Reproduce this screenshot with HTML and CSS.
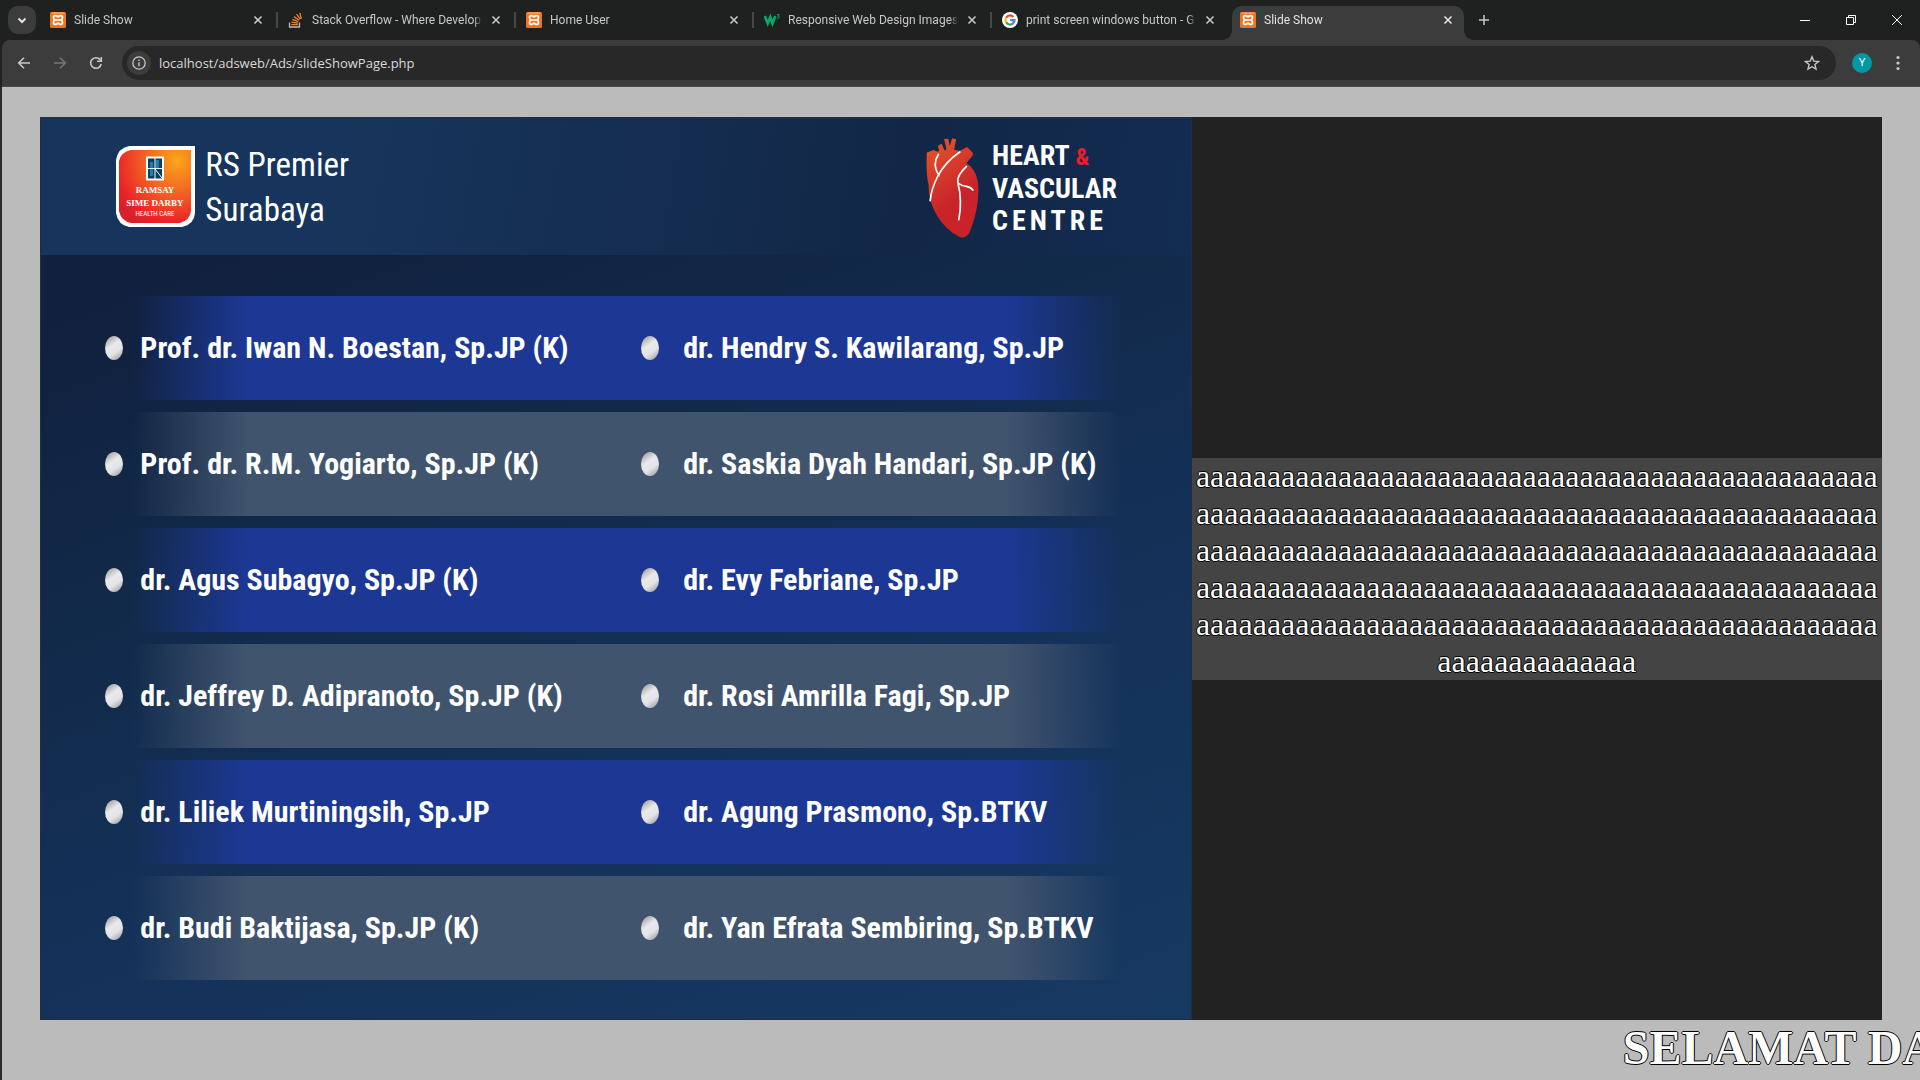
FILE: index.html
```html
<!DOCTYPE html>
<html lang="id">
<head>
<meta charset="utf-8">
<title>Slide Show</title>
<link rel="stylesheet" href="styles.css">
</head>
<body>
<svg class="defs" aria-hidden="true">
  <defs>
    <symbol id="xampp" viewBox="0 0 16 16">
      <rect width="16" height="16" rx="1.5" fill="#f0741c"/>
      <path d="M1.500 1h13" stroke="#fbb97c" stroke-width="1"/>
      <path d="M7.400 5.600V5c0-.9-.5-1.300-1.400-1.300H5C3.900 3.700 3.500 4.500 3.500 5.500c0 1.200.4 2 1.300 2.500-.9.500-1.300 1.300-1.300 2.500 0 1 .4 1.900 1.500 1.900h1c.9 0 1.400-.4 1.400-1.300v-.7M8.600 5.600V5c0-.9.5-1.300 1.400-1.300h1c1.100 0 1.500.8 1.500 1.800 0 1.200-.4 2-1.300 2.500.9.500 1.300 1.300 1.300 2.500 0 1-.4 1.900-1.500 1.900h-1c-.9 0-1.400-.4-1.400-1.300v-.7M4.800 8h6.400" fill="none" stroke="#fff" stroke-width="1.700"/>
    </symbol>
    <symbol id="close" viewBox="0 0 16 16">
      <path d="M4.500 4.500l7 7M11.500 4.500l-7 7" stroke="currentColor" stroke-width="1.600" fill="none"/>
    </symbol>
  </defs>
</svg>

<header class="browser">
  <div class="tabstrip">
    <button class="tab-search" aria-label="Search tabs"><svg width="16" height="16" viewBox="0 0 16 16"><path d="M4.500 6.500L8 10l3.500-3.500" fill="none" stroke="#e3e3e3" stroke-width="2"/></svg></button>
    <nav class="tabs">
      <div class="tab"><svg class="favicon"><use href="#xampp"/></svg><a class="title" href="#">Slide Show</a><button class="close" aria-label="Close tab"><svg><use href="#close"/></svg></button></div>
      <div class="tab"><svg class="favicon" viewBox="0 0 16 16"><path d="M1.500 10.500v4.500h10v-4.500" fill="none" stroke="#bcbbbb" stroke-width="1.300"/><path d="M3.300 12.600h6.500M3.500 10.200l6.400 1M4.300 7.400l6 2.300M6 4.600l5.100 3.700M8.600 2.100l3.700 5.100M12 .8l1.200 6" stroke="#f48024" stroke-width="1.300"/></svg><a class="title" href="#">Stack Overflow - Where Develop</a><button class="close" aria-label="Close tab"><svg><use href="#close"/></svg></button></div>
      <div class="tab"><svg class="favicon"><use href="#xampp"/></svg><a class="title" href="#">Home User</a><button class="close" aria-label="Close tab"><svg><use href="#close"/></svg></button></div>
      <div class="tab"><svg class="favicon" viewBox="0 0 16 16"><path d="M.8 4l2.900 7.500L6.300 5l2.200 6.500L11.300 4" fill="none" stroke="#04aa6d" stroke-width="2.600"/><path d="M13 2.700h2.300L14 4.200q1.500 0 1.300 1.200T13 6.200" fill="none" stroke="#04aa6d" stroke-width="1"/></svg><a class="title" href="#">Responsive Web Design Images</a><button class="close" aria-label="Close tab"><svg><use href="#close"/></svg></button></div>
      <div class="tab"><svg class="favicon" viewBox="0 0 16 16"><circle cx="8" cy="8" r="8" fill="#fff"/><g fill="none" stroke-width="2.200"><path d="M4.100 5.700A4.500 4.500 0 0 1 11.300 4.900" stroke="#ea4335"/><path d="M4.100 5.700a4.500 4.500 0 0 0 0 4.600" stroke="#fbbc05"/><path d="M4.100 10.300a4.500 4.500 0 0 0 6.900 1.100" stroke="#34a853"/><path d="M8.200 8.100h4.300a4.500 4.500 0 0 1-1.500 3.300" stroke="#4285f4"/></g></svg><a class="title" href="#">print screen windows button - G</a><button class="close" aria-label="Close tab"><svg><use href="#close"/></svg></button></div>
      <div class="tab active"><svg class="favicon"><use href="#xampp"/></svg><a class="title" href="#">Slide Show</a><button class="close" aria-label="Close tab"><svg><use href="#close"/></svg></button></div>
    </nav>
    <button class="new-tab" aria-label="New tab"><svg width="16" height="16" viewBox="0 0 16 16"><path d="M8 3v10M3 8h10" stroke="#c7c7c7" stroke-width="1.500"/></svg></button>
    <div class="window-controls">
      <button aria-label="Minimize"><svg width="10" height="10" viewBox="0 0 10 10"><path d="M0 5.500h10" stroke="#fff"/></svg></button>
      <button aria-label="Restore"><svg width="10" height="10" viewBox="0 0 10 10"><path d="M.5 2.500h7v7h-7zM2.500 2.500v-2h7v7h-2" fill="none" stroke="#fff"/></svg></button>
      <button aria-label="Close"><svg width="10" height="10" viewBox="0 0 10 10"><path d="M0 0l10 10M10 0L0 10" stroke="#fff"/></svg></button>
    </div>
  </div>
  <div class="toolbar">
    <button class="nav-button" aria-label="Back"><svg viewBox="0 0 16 16"><path d="M14 8H3M8 2.700L2.700 8 8 13.300" fill="none" stroke="#c7c7c7" stroke-width="1.600"/></svg></button>
    <button class="nav-button" aria-label="Forward" disabled><svg viewBox="0 0 16 16"><path d="M2 8h11M8 2.700L13.300 8 8 13.300" fill="none" stroke="#757575" stroke-width="1.600"/></svg></button>
    <button class="nav-button" aria-label="Reload"><svg viewBox="0 0 16 16"><path d="M13.200 9A5.300 5.300 0 1 1 12 4.500l1 1" fill="none" stroke="#c7c7c7" stroke-width="1.600"/><path d="M13.300 2v4.300H9" fill="none" stroke="#c7c7c7" stroke-width="1.600"/></svg></button>
    <form class="omnibox">
      <button class="site-info" type="button" aria-label="View site information"><svg width="16" height="16" viewBox="0 0 16 16"><circle cx="8" cy="8" r="6.200" fill="none" stroke="#c7c7c7" stroke-width="1.300"/><path d="M8 7.200v4M8 4.600V6" stroke="#c7c7c7" stroke-width="1.400"/></svg></button>
      <input class="url" type="text" aria-label="Address" value="localhost/adsweb/Ads/slideShowPage.php">
      <button class="bookmark" type="button" aria-label="Bookmark this tab"><svg width="16" height="16" viewBox="0 0 16 16"><path d="M8 1.800l1.800 4.300 4.700.4-3.600 3 1.100 4.600L8 11.700l-4 2.400 1.100-4.600-3.600-3 4.700-.4z" fill="none" stroke="#c7c7c7" stroke-width="1.400"/></svg></button>
    </form>
    <button class="avatar" aria-label="Profile">Y</button>
    <button class="menu" aria-label="Menu"><svg width="4" height="16" viewBox="0 0 4 16"><g fill="#c7c7c7"><circle cx="2" cy="2.500" r="1.600"/><circle cx="2" cy="8" r="1.600"/><circle cx="2" cy="13.500" r="1.600"/></g></svg></button>
  </div>
</header>

<main class="page">
  <div class="display">
    <section class="slide">
      <div class="slide-header">
        <div class="hospital">
          <svg class="hospital-logo" viewBox="0 0 79 81">
            <defs>
              <radialGradient id="sunset" cx="0.800" cy="0.150" r="1"><stop offset="0" stop-color="#faa61a"/><stop offset="0.500" stop-color="#f15a24"/><stop offset="0.850" stop-color="#ea2227"/><stop offset="1" stop-color="#d81f2a"/></radialGradient>
            </defs>
            <path d="M13 0h66v65q0 13-13 16H13Q2 79 0 67V14Q2 2 13 0z" fill="#fff"/>
            <path d="M15 4h60v61q-1 9-11 12H15Q5 75 3 65V15Q5 6 15 4z" fill="url(#sunset)"/>
            <path d="M30 10.500h18v24H30z" fill="#fff"/>
            <path d="M32 12.500h14v20H32z" fill="#0d3d66"/>
            <path d="M34 16h3v14h-3zM40 14h3v8h-3z" fill="#1783b0"/>
            <path d="M39 12v21M32 22.500h14M39 23l7 9" stroke="#fff" fill="none"/>
            <g fill="#fff" text-anchor="middle">
              <text class="logo-name" x="39" y="47">RAMSAY</text>
              <text class="logo-name" x="39" y="60">SIME DARBY</text>
              <text class="logo-sub" x="39" y="70">HEALTH CARE</text>
            </g>
          </svg>
          <p class="hospital-name">RS Premier<br>Surabaya</p>
        </div>
        <div class="centre">
          <svg class="heart" viewBox="141 83 158 303">
            <defs><linearGradient id="heart-fill" x1="0.200" y1="0" x2="0.600" y2="1"><stop offset="0" stop-color="#e4532a"/><stop offset="0.650" stop-color="#c8242b"/><stop offset="1" stop-color="#cb2229"/></linearGradient></defs>
            <path d="M142 127l21-8 12 5 5-3-4-14 11-7 10 21 5-4-7-31 12-1 5 21 7-22 12 3-6 31 17 3 22-11 18 19-3 9-18 21 12 8q24 22 25 69 0 57-21 115-11 38-35 29-45-20-74-74-20-38-20-84-8-30-5-95z" fill="url(#heart-fill)"/>
            <path d="M178 132q-20 30 1 64M242 125q-42 28-66 72-20 40-23 74M262 168q-30 28-26 48 14 55 3 112M239 220q12 8 22 8 14 2 20 11" fill="none" stroke="#fff" stroke-width="5" stroke-linecap="round"/>
          </svg>
          <p class="centre-name">HEART <span class="amp">&amp;</span><br>VASCULAR<br><span class="spread">CENTRE</span></p>
        </div>
      </div>
      <ul class="doctors">
        <li class="row"><span class="doctor">Prof. dr. Iwan N. Boestan, Sp.JP (K)</span><span class="doctor">dr. Hendry S. Kawilarang, Sp.JP</span></li>
        <li class="row"><span class="doctor">Prof. dr. R.M. Yogiarto, Sp.JP (K)</span><span class="doctor">dr. Saskia Dyah Handari, Sp.JP (K)</span></li>
        <li class="row"><span class="doctor">dr. Agus Subagyo, Sp.JP (K)</span><span class="doctor">dr. Evy Febriane, Sp.JP</span></li>
        <li class="row"><span class="doctor">dr. Jeffrey D. Adipranoto, Sp.JP (K)</span><span class="doctor">dr. Rosi Amrilla Fagi, Sp.JP</span></li>
        <li class="row"><span class="doctor">dr. Liliek Murtiningsih, Sp.JP</span><span class="doctor">dr. Agung Prasmono, Sp.BTKV</span></li>
        <li class="row"><span class="doctor">dr. Budi Baktijasa, Sp.JP (K)</span><span class="doctor">dr. Yan Efrata Sembiring, Sp.BTKV</span></li>
      </ul>
    </section>
    <aside class="side">
      <p class="message">aaaaaaaaaaaaaaaaaaaaaaaaaaaaaaaaaaaaaaaaaaaaaaaaaaaaaaaaaaaaaaaaaaaaaaaaaaaaaaaaaaaaaaaaaaaaaaaaaaaaaaaaaaaaaaaaaaaaaaaaaaaaaaaaaaaaaaaaaaaaaaaaaaaaaaaaaaaaaaaaaaaaaaaaaaaaaaaaaaaaaaaaaaaaaaaaaaaaaaaaaaaaaaaaaaaaaaaaaaaaaaaaaaaaaaaaaaaaaaaaaaaaaaaaaaaaaa</p>
    </aside>
  </div>
  <p class="ticker">SELAMAT DATANG</p>
</main>
</body>
</html>
```

FILE: styles.css
```css
* {
  box-sizing: border-box;
}

body {
  margin: 0;
  min-height: 100vh;
  display: flex;
  flex-direction: column;
  background: #2b2b2b;
  font-family: "Liberation Serif", "Times New Roman", serif;
}

button,
input {
  margin: 0;
  padding: 0;
  border: 0;
  background: none;
  color: inherit;
  font: inherit;
}

button {
  display: flex;
  align-items: center;
  justify-content: center;
  flex: none;
}

.defs {
  position: absolute;
  width: 0;
  height: 0;
}

/* Browser chrome */

.browser {
  background: #1f2120;
  color: #c7c7c7;
  font-family: Roboto, "Open Sans", sans-serif;
}

.tabstrip {
  display: flex;
  height: 40px;
  padding: 6px 0 0 8px;
}

.tab-search {
  width: 28px;
  height: 28px;
  border-radius: 10px;
  background: #3c3c3c;
}

.tabs {
  display: flex;
  gap: 6px;
  margin-left: 6px;
}

.tab {
  position: relative;
  display: flex;
  align-items: center;
  width: 232px;
  height: 34px;
  padding: 0 8px 6px;
  border-radius: 10px 10px 0 0;
}

.tab + .tab:not(.active)::before {
  content: "";
  position: absolute;
  left: -4px;
  top: 6px;
  width: 2px;
  height: 16px;
  background: #474747;
}

.favicon {
  flex: none;
  width: 16px;
  height: 16px;
}

.title {
  flex: 1;
  min-width: 0;
  margin: 0 2px 0 8px;
  overflow: hidden;
  white-space: nowrap;
  color: inherit;
  font-size: 12px;
  line-height: 20px;
  text-decoration: none;
  -webkit-mask-image: linear-gradient(to left, transparent 4px, #000 12px);
  mask-image: linear-gradient(to left, transparent 4px, #000 12px);
}

.close,
.close svg {
  width: 16px;
  height: 16px;
}

.tab.active {
  background: #3c3c3c;
  color: #e3e3e3;
}

.tab.active::before,
.tab.active::after {
  content: "";
  position: absolute;
  bottom: 0;
  width: 10px;
  height: 10px;
}

.tab.active::before {
  left: -10px;
  background: radial-gradient(circle at 0 0, transparent 10px, #3c3c3c 10px);
}

.tab.active::after {
  right: -10px;
  background: radial-gradient(circle at 100% 0, transparent 10px, #3c3c3c 10px);
}

.new-tab {
  width: 28px;
  height: 28px;
  margin-left: 6px;
}

.window-controls {
  display: flex;
  margin-left: auto;
}

.window-controls button {
  width: 46px;
  height: 28px;
}

.toolbar {
  display: flex;
  align-items: center;
  height: 47px;
  margin-left: 2px;
  padding: 0 12px 1px 4px;
  border-bottom: 1px solid #4a4a4a;
  border-radius: 8px 8px 0 0;
  background: #3c3c3c;
}

.nav-button {
  width: 36px;
  height: 34px;
}

.nav-button svg {
  width: 16px;
  height: 16px;
}

.omnibox {
  display: flex;
  align-items: center;
  flex: 1;
  height: 34px;
  margin: 0 16px 0 8px;
  padding: 0 12px 0 5px;
  border-radius: 17px;
  background: #282828;
}

.site-info {
  width: 24px;
  height: 24px;
  border-radius: 12px;
  background: #3c3c3c;
}

.url {
  flex: 1;
  margin-left: 8px;
  color: #dadada;
  font-family: "Open Sans", sans-serif;
  font-size: 13px;
  line-height: 20px;
}

.bookmark {
  width: 24px;
  height: 24px;
}

.avatar {
  width: 20px;
  height: 20px;
  border-radius: 10px;
  background: #0097a7;
  color: #fff;
  font-size: 11px;
}

.menu {
  width: 20px;
  height: 20px;
  margin-left: 16px;
}

/* Page content */

.page {
  flex: 1;
  margin-left: 2px;
  padding-top: 30px;
  overflow: hidden;
  background: #bbb;
}

.display {
  display: flex;
  width: 96%;
  margin: 0 auto;
}

.slide {
  flex: 5;
  min-width: 0;
  border: 1px solid #262c38;
  background: linear-gradient(160deg, #11203e 15%, #122a4a 40%, #143159 65%, #163962 100%);
  color: #fff;
  font-family: "Roboto Condensed", Roboto, sans-serif;
}

.slide-header {
  display: flex;
  justify-content: space-between;
  height: 137px;
  padding: 20px 74px 0 75px;
  background: linear-gradient(100deg, #17355c 25%, #122747 75%, #132c52);
}

.hospital,
.centre {
  display: flex;
  align-items: flex-start;
}

.hospital-logo {
  width: 79px;
  height: 81px;
  margin-top: 8px;
}

.logo-name {
  font: bold 9px "Liberation Serif", serif;
}

.logo-sub {
  font: 7px "Roboto Condensed", Roboto, sans-serif;
}

.hospital-name {
  margin: 4px 0 0 10px;
  font-size: 33px;
  line-height: 45px;
}

.heart {
  width: 53px;
  height: 101px;
}

.centre-name {
  margin: 2px 0 0 13px;
  font-size: 28px;
  font-weight: bold;
  line-height: 32px;
}

.amp {
  color: #e3202c;
  font-size: 24px;
}

.spread {
  letter-spacing: 4px;
}

.doctors {
  display: flex;
  flex-direction: column;
  gap: 12px;
  margin: 0;
  padding: 41px 0 39px;
  list-style: none;
}

.row {
  display: grid;
  grid-template-columns: minmax(0, 535fr) minmax(0, 485fr);
  align-items: center;
  height: 104px;
  padding: 0 64px;
  background: linear-gradient(to right, transparent 8%, #1c3894 18%, #1c3894 84%, transparent 94%);
}

.row:nth-child(even) {
  background: linear-gradient(to right, transparent 8%, #41546e 18%, #41546e 84%, transparent 94%);
}

.doctor {
  display: flex;
  align-items: center;
  gap: 17px;
  font-size: 30px;
  font-weight: bold;
  line-height: 36px;
  white-space: nowrap;
}

.doctor + .doctor {
  gap: 24px;
}

.doctor::before {
  content: "";
  width: 18px;
  height: 24px;
  border-radius: 50%;
  background: linear-gradient(145deg, #a5a5a5 10%, #e9e9ec 40%, #e4e4e8 65%, #9c9c9c 95%);
}

.side {
  flex: 3;
  min-width: 0;
  display: flex;
  flex-direction: column;
  justify-content: center;
  background: #222;
}

.message {
  margin: 0;
  background: #444;
  font-size: 32px;
  line-height: 37px;
  text-align: center;
  word-break: break-all;
}

.message,
.ticker {
  color: #fff;
  text-shadow: -1px 0 #000, 0 1px #000, 1px 0 #000, 0 -1px #000;
}

.ticker {
  margin: 0;
  padding-left: 84.5%;
  font-size: 48px;
  font-weight: bold;
  line-height: 55px;
  white-space: nowrap;
}
```
